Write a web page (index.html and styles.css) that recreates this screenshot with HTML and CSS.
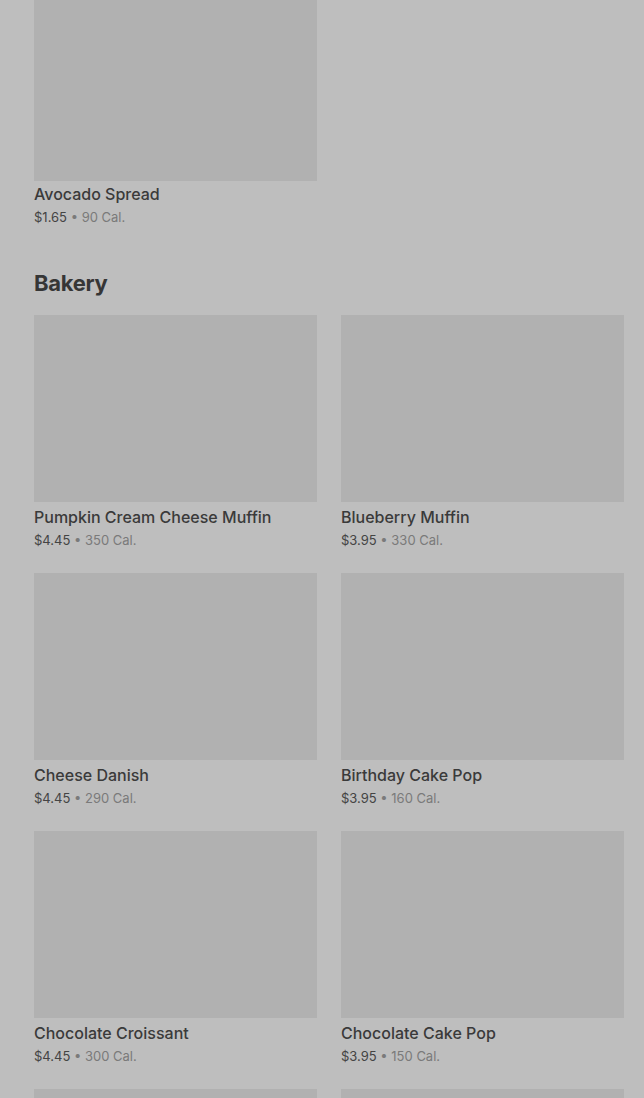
FILE: index.html
```html
<!DOCTYPE html>
<html lang="en">
  <head>
    <meta charset="utf-8">
    <meta name="viewport" content="width=device-width, initial-scale=1">
    <title>Menu</title>
    <link rel="stylesheet" href="styles.css">
  </head>
  <body>
    <div class="menu">
      <section class="section section-first">
        <div class="grid">
          <div class="item">
            <div class="item-image"></div>
            <div class="item-name">Avocado Spread</div>
            <div class="item-meta"><span class="price">$1.65</span> • 90 Cal.</div>
          </div>
        </div>
      </section>

      <section class="section">
        <h2 class="section-title">Bakery</h2>
        <div class="grid">
          <div class="item">
            <div class="item-image"></div>
            <div class="item-name">Pumpkin Cream Cheese Muffin</div>
            <div class="item-meta"><span class="price">$4.45</span> • 350 Cal.</div>
          </div>
          <div class="item">
            <div class="item-image"></div>
            <div class="item-name">Blueberry Muffin</div>
            <div class="item-meta"><span class="price">$3.95</span> • 330 Cal.</div>
          </div>
          <div class="item">
            <div class="item-image"></div>
            <div class="item-name">Cheese Danish</div>
            <div class="item-meta"><span class="price">$4.45</span> • 290 Cal.</div>
          </div>
          <div class="item">
            <div class="item-image"></div>
            <div class="item-name">Birthday Cake Pop</div>
            <div class="item-meta"><span class="price">$3.95</span> • 160 Cal.</div>
          </div>
          <div class="item">
            <div class="item-image"></div>
            <div class="item-name">Chocolate Croissant</div>
            <div class="item-meta"><span class="price">$4.45</span> • 300 Cal.</div>
          </div>
          <div class="item">
            <div class="item-image"></div>
            <div class="item-name">Chocolate Cake Pop</div>
            <div class="item-meta"><span class="price">$3.95</span> • 150 Cal.</div>
          </div>
          <div class="item">
            <div class="item-image"></div>
          </div>
          <div class="item">
            <div class="item-image"></div>
          </div>
        </div>
      </section>
    </div>
  </body>
</html>
```

FILE: styles.css
```css
html, body {
  margin: 0;
  padding: 0;
  background-color: #bebebe;
  height: 1098px;
  overflow: hidden;
}
body {
  font-family: Inter, "Liberation Sans", sans-serif;
  color: #3b3b3b;
}
.menu {
  padding: 0 20px 0 34px;
}
.section-first {
  margin-top: -6px;
}
.section-first .item-name {
  padding-top: 3px;
}
.section-title {
  margin: 43px 0 18px;
  font-size: 22px;
  line-height: 28px;
  font-weight: 700;
  letter-spacing: -0.3px;
  color: #363636;
}
.grid {
  display: grid;
  grid-template-columns: 1fr 1fr;
  column-gap: 24px;
  row-gap: 24px;
}
.item-image {
  height: 187px;
  background-color: #b1b1b1;
}
.item-name {
  padding-top: 5px;
  font-size: 16px;
  line-height: 20px;
  font-weight: 500;
  color: #3a3a3a;
}
.item-meta {
  margin-top: 4px;
  font-size: 13px;
  line-height: 18px;
  color: #7a7a7a;
}
.price {
  color: #444444;
}
```
